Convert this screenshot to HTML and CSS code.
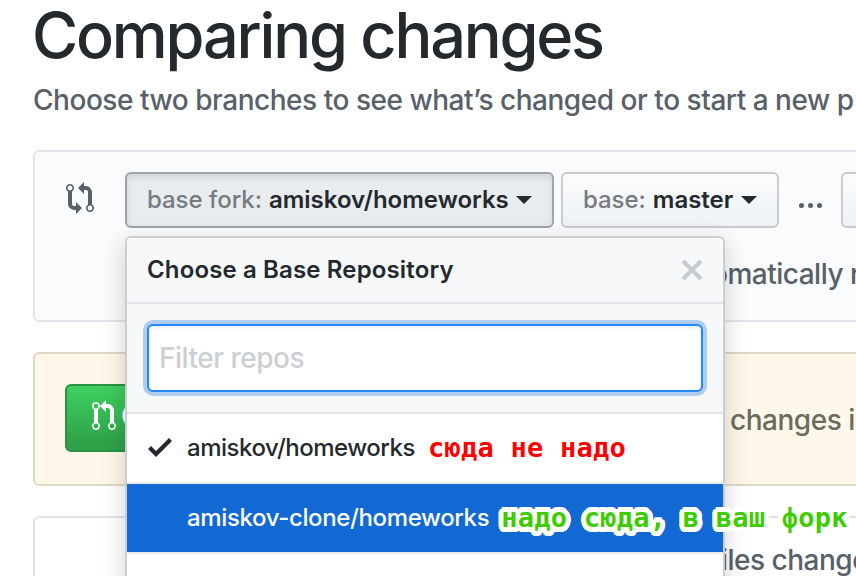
FILE: index.html
```html
<!DOCTYPE html>
<html lang="en">
<head>
<meta charset="utf-8">
<title>Comparing changes</title>
<link rel="stylesheet" href="styles.css">
</head>
<body>
<main class="page">
  <h1 class="title">Comparing changes</h1>
  <p class="subtitle">Choose two branches to see what’s changed or to start a new p</p>

  <section class="range">
    <svg class="range-icon" width="28" height="32" viewBox="0 0 14 16"><path fill="currentColor" fill-rule="evenodd" d="M5 12H4c-.27-.02-.48-.11-.69-.31-.21-.2-.3-.42-.31-.69V4.72A1.993 1.993 0 0 0 2 1a1.993 1.993 0 0 0-1 3.72V11c.03.78.34 1.47.94 2.06.6.59 1.28.91 2.06.94h1v2l3-3-3-3v2zM2 1.8c.66 0 1.2.55 1.2 1.2 0 .65-.55 1.2-1.2 1.2C1.35 4.200.8 3.650.8 3c0-.65.55-1.2 1.2-1.2zm11 9.480V5c-.03-.78-.34-1.470-.94-2.060-.6-.59-1.280-.91-2.060-.94H9V0L6 3l3 3V4h1c.27.02.48.11.69.31.21.2.3.42.31.69v6.280A1.993 1.993 0 0 0 12 15a1.993 1.993 0 0 0 1-3.720zm-1 2.920c-.66 0-1.200-.55-1.200-1.200 0-.65.55-1.200 1.200-1.200.65 0 1.200.55 1.200 1.200 0 .65-.55 1.200-1.200 1.200z"/></svg>
    <div class="range-body">
      <div class="controls">
        <div class="fork-select">
          <button class="btn btn-fork"><span class="label">base fork:</span> <b class="fork-name">amiskov/homeworks</b><i class="caret"></i></button>
          <div class="menu">
            <header class="menu-header">
              <span class="menu-title">Choose a Base Repository</span>
              <svg class="close" width="22" height="22" viewBox="0 0 22 22"><path d="M2 2 20 20M20 2 2 20" stroke="currentColor" stroke-width="4" fill="none"/></svg>
            </header>
            <div class="menu-filter"><input class="filter" placeholder="Filter repos"></div>
            <div class="item">
              <svg class="check" width="24" height="32" viewBox="0 0 12 16"><path fill="currentColor" d="M12 5l-8 8-4-4 1.500-1.500L4 10l6.500-6.500z"/></svg>
              <span class="item-name">amiskov/homeworks</span>
              <span class="note note-red">сюда не надо</span>
            </div>
            <div class="item item-active">
              <span class="check"></span>
              <span class="item-name clone-name">amiskov-clone/homeworks</span>
              <span class="note note-green">надо сюда, в ваш форк</span>
            </div>
          </div>
        </div>
        <button class="btn btn-base"><span class="label">base:</span> <b class="branch-name">master</b><i class="caret"></i></button>
        <span class="dots"><i></i><i></i><i></i></span>
        <button class="btn btn-head"></button>
      </div>
      <p class="merge-status"><span class="tick"></span>omatically r</p>
    </div>
  </section>

  <section class="discuss">
    <button class="create"><svg width="24" height="32" viewBox="0 0 12 16"><path fill="currentColor" fill-rule="evenodd" d="M11 11.280V5c-.03-.78-.34-1.470-.94-2.060C9.460 2.350 8.780 2.030 8 2H7V0L4 3l3 3V4h1c.27.02.48.11.69.31.21.2.3.42.31.69v6.280A1.993 1.993 0 0 0 10 15a1.993 1.993 0 0 0 1-3.720zm-1 2.920c-.66 0-1.200-.55-1.200-1.200 0-.65.55-1.200 1.200-1.200.65 0 1.200.55 1.200 1.200 0 .65-.55 1.200-1.200 1.200zM4 3c0-1.110-.89-2-2-2a1.993 1.993 0 0 0-1 3.720v6.560A1.993 1.993 0 0 0 2 15a1.993 1.993 0 0 0 1-3.720V4.720c.59-.34 1-.98 1-1.720zm-.8 10c0 .66-.55 1.200-1.200 1.200-.65 0-1.200-.55-1.200-1.200 0-.65.55-1.200 1.200-1.200.65 0 1.200.55 1.200 1.200zM2 4.200C1.340 4.200.8 3.650.8 3c0-.65.55-1.200 1.200-1.200.65 0 1.200.55 1.200 1.200 0 .65-.55 1.200-1.200 1.200z"/></svg><span>C</span></button>
    <span class="discuss-text">changes i</span>
  </section>

  <section class="files"><span class="files-text">iles change</span></section>
</main>
</body>
</html>
```

FILE: styles.css
```css
* { box-sizing: border-box; }
html, body { margin: 0; height: 576px; overflow: hidden; }
body {
  background: #fff;
  color: #24292e;
  font-family: Inter, "Liberation Sans", sans-serif;
  font-size: 28px;
}
.page { height: 576px; overflow: hidden; padding-left: 33px; white-space: nowrap; }
.title {
  margin: 0 0 0 -1px;
  height: 78px;
  line-height: 71px;
  font-size: 63px;
  font-weight: 450;
  letter-spacing: -2.2px;
}
.subtitle {
  margin: 0;
  height: 72px;
  line-height: 45px;
  color: #586069;
  font-weight: 450;
  letter-spacing: -0.47px;
}
.range {
  display: flex;
  width: 1030px;
  height: 172px;
  padding: 20px 0 0 31px;
  border: 2px solid #e1e4e8;
  border-radius: 6px;
  background: #fafbfc;
}
.range-icon { flex: none; margin-top: 10px; color: #586069; }
.range-body { margin-left: 31px; }
.controls { display: flex; height: 56px; }
.btn {
  display: flex;
  align-items: center;
  height: 56px;
  margin: 0;
  padding: 0 20px 2px;
  border: 2px solid #c9cbcf;
  border-radius: 6px;
  background: linear-gradient(#fafbfc, #eff3f6 90%);
  color: #24292e;
  font: 500 24px Inter, sans-serif;
  white-space: nowrap;
}
.btn b { font-weight: 600; margin-left: 7px; }
.label { color: #777b7f; font-weight: 450; letter-spacing: -0.05px; }
.caret {
  margin: 2px 0 0 7px;
  border: 8px solid transparent;
  border-top-color: #24292e;
  border-bottom: 0;
}
.fork-select { position: relative; }
.btn-fork {
  width: 429px;
  background: #e9ecef;
  border-color: #a0a3a7;
  box-shadow: inset 0 3px 6px rgba(27, 31, 35, .12);
}
.btn-base { width: 218px; margin-left: 7px; }
.btn-base .caret { margin-left: 8px; }
.btn-head { width: 160px; margin-left: 18px; }
.dots { display: flex; gap: 4px; width: 44px; padding: 31px 0 0 20px; }
.dots i { flex: none; width: 5px; height: 5px; border-radius: 50%; background: #586069; }
.merge-status {
  display: flex;
  align-items: center;
  height: 40px;
  margin: 26px 0 0;
  color: #586069;
  font-weight: 450;
  letter-spacing: -0.5px;
}
.tick { width: 2px; height: 2px; margin: 3px 584px 0 0; background: #28a745; }
.menu {
  position: absolute;
  z-index: 5;
  top: 64px;
  left: 0;
  width: 600px;
  height: 400px;
  border: 2px solid #cccdcf;
  border-radius: 6px;
  background: #fff;
  box-shadow: 0 6px 24px rgba(27, 31, 35, .2);
  font-size: 24px;
}
.menu-header {
  display: flex;
  align-items: center;
  justify-content: space-between;
  height: 66px;
  padding: 0 20px;
  border-bottom: 2px solid #e1e4e8;
  border-radius: 4px 4px 0 0;
  background: #f6f8fa;
}
.menu-title { padding-bottom: 2px; font-weight: 600; letter-spacing: .14px; }
.close { color: #c6cbd1; }
.menu-filter {
  height: 110px;
  padding: 20px 18px 0 20px;
  border-bottom: 2px solid #dfe2e5;
  background: #f6f8fa;
}
.filter {
  display: block;
  width: 556px;
  height: 68px;
  padding: 0 10px;
  border: 2px solid #2188ff;
  border-radius: 6px;
  outline: none;
  background: #fff;
  box-shadow: inset 0 2px 4px rgba(27, 31, 35, .075), 0 0 0 4px #b0cdf0;
  font: 450 28px Inter, sans-serif;
  letter-spacing: -0.5px;
}
.filter::placeholder { color: #cbcfd3; opacity: 1; }
.item {
  display: flex;
  align-items: center;
  height: 70px;
  padding-left: 20px;
  border-bottom: 2px solid #eaecef;
}
.item-active { background: #1269d3; color: #fff; }
.item-name { padding-bottom: 2px; font-weight: 450; letter-spacing: -0.48px; }
.clone-name { letter-spacing: -0.36px; }
.check { flex: none; width: 24px; margin-right: 16px; }
.item svg.check { position: relative; left: 1px; margin-top: -3px; }
.note {
  margin-left: 13px;
  padding-bottom: 2px;
  font: bold 27px "DejaVu Sans Mono", monospace;
  letter-spacing: .25px;
}
.note-red { color: #f00; }
.note-green {
  color: #3dcc00;
  margin-left: 12px;
  text-shadow:
    5px 0 #fff, 4.6px 1.9px #fff, 3.5px 3.5px #fff, 1.9px 4.6px #fff,
    0 5px #fff, -1.9px 4.6px #fff, -3.5px 3.5px #fff, -4.6px 1.9px #fff,
    -5px 0 #fff, -4.6px -1.9px #fff, -3.5px -3.5px #fff, -1.9px -4.6px #fff,
    0 -5px #fff, 1.9px -4.6px #fff, 3.5px -3.5px #fff, 4.6px -1.9px #fff,
    3px 0 #fff, -3px 0 #fff, 0 3px #fff, 0 -3px #fff,
    2px 2px #fff, -2px 2px #fff, -2px -2px #fff, 2px -2px #fff;
}
.discuss {
  display: flex;
  align-items: flex-start;
  width: 1030px;
  height: 134px;
  margin-top: 30px;
  padding: 30px 0 0 30px;
  border: 2px solid #dfd8c2;
  border-radius: 6px;
  background: #fff8ea;
  color: #6b6b60;
}
.create {
  display: flex;
  flex: none;
  align-items: center;
  width: 300px;
  height: 68px;
  padding: 0 25px 4px;
  border: 2px solid #2c9142;
  border-radius: 6px;
  background: linear-gradient(#3ed05f, #2fa148 90%);
  color: #fff;
  font: 600 28px Inter, sans-serif;
}
.create span { margin-left: 5px; }
.discuss-text { margin-left: 365px; line-height: 72px; font-weight: 450; letter-spacing: -0.47px; }
.files {
  width: 1030px;
  height: 120px;
  margin-top: 30px;
  padding: 22px 0 0 686px;
  border: 2px solid #dfe2e5;
  border-radius: 6px;
  color: #586069;
}
.files-text { line-height: 40px; font-weight: 450; letter-spacing: -0.5px; }
```
